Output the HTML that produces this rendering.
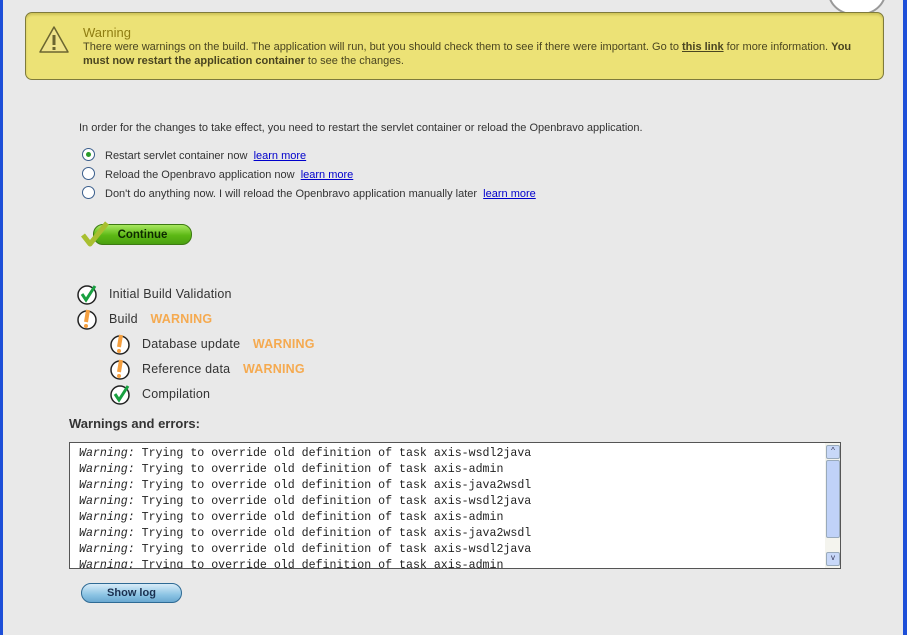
<!DOCTYPE html>
<html><head><style>
body{margin:0;width:907px;height:635px;background:#e9e9e9;position:relative;overflow:hidden;font-family:"Liberation Sans",sans-serif;}
.bl{position:absolute;left:0;top:0;width:3px;height:635px;background:#1d4fd8}
.br{position:absolute;right:0;top:0;width:4px;height:635px;background:#1d4fd8}
.warn{position:absolute;left:25px;top:12px;width:857px;height:66px;background:#ece276;border:1px solid #7e7a3c;border-radius:7px;box-shadow:inset 0 2px 2px #cfc45a}
.warn .t{position:absolute;left:57px;top:12px;font-size:13px;color:#8f7d12;}
.warn .m{position:absolute;left:57px;top:27px;width:785px;font-size:11px;line-height:14px;color:#4a4520}
.warn a{color:#4a4520;font-weight:bold;text-decoration:underline}
.txt{position:absolute;font-size:11px;color:#333}
.radio{position:absolute;width:11px;height:11px;border:1px solid #3a5e8c;border-radius:50%;background:#fff}
.lm{color:#00c;text-decoration:underline}
.st{position:absolute;font-size:12.5px;color:#333;letter-spacing:0.2px}
.w{color:#f5aa50;font-weight:bold;margin-left:9px}
.log{position:absolute;left:69px;top:442px;width:770px;height:125px;background:#fff;border:1px solid #555;overflow:hidden}
.log pre{margin:0;padding:3px 0 0 9px;font-family:"Liberation Mono",monospace;font-size:11.6px;line-height:16px;color:#222}
.sb{position:absolute;right:0;top:0;width:15px;height:125px;background:#f4f4ee}
</style></head><body>
<div class="bl"></div><div class="br"></div>
<div style="position:absolute;left:828px;top:-30px;width:54px;height:42px;border-radius:50%;background:#fff;border:2px solid #999"></div>
<div class="warn">
<svg style="position:absolute;left:12px;top:12px" width="32" height="30" viewBox="0 0 32 30"><path d="M16 2 L30 27 L2 27 Z" fill="#efe38a" stroke="#6b6530" stroke-width="1.5" stroke-linejoin="round"/><rect x="14.5" y="10" width="3" height="10" fill="#6b6530"/><rect x="14.5" y="22" width="3" height="3" fill="#6b6530"/></svg>
<div class="t">Warning</div>
<div class="m">There were warnings on the build. The application will run, but you should check them to see if there were important. Go to <a>this link</a> for more information. <b>You must now restart the application container</b> to see the changes.</div>
</div>
<div class="txt" style="left:79px;top:122px">In order for the changes to take effect, you need to restart the servlet container or reload the Openbravo application.</div>
<div class="radio" style="left:82px;top:148px"><div style="position:absolute;left:3px;top:3px;width:5px;height:5px;border-radius:50%;background:#2a9a2a"></div></div>
<div class="txt" style="left:105px;top:150px">Restart servlet container now &nbsp;<span class="lm">learn more</span></div>
<div class="radio" style="left:82px;top:167px"></div>
<div class="txt" style="left:105px;top:169px">Reload the Openbravo application now &nbsp;<span class="lm">learn more</span></div>
<div class="radio" style="left:82px;top:186px"></div>
<div class="txt" style="left:105px;top:188px">Don't do anything now. I will reload the Openbravo application manually later &nbsp;<span class="lm">learn more</span></div>
<div style="position:absolute;left:93px;top:224px;width:97px;height:19px;border-radius:10px;background:linear-gradient(#a8e860,#5cb814 55%,#4aa010);border:1px solid #3d7a12;font-size:11.5px;font-weight:bold;color:#0e2a00;text-align:center;line-height:20px">Continue</div>
<svg style="position:absolute;left:80px;top:220px" width="30" height="28"><path d="M3 15 L10 24 L27 3" fill="none" stroke="#a8bf30" stroke-width="5" stroke-linejoin="round"/></svg>
<svg width="0" height="0" style="position:absolute"><defs>
<g id="ok"><circle cx="11" cy="12" r="9" fill="#fff" stroke="#222" stroke-width="1.5"/><path d="M6 11 L10 17 L19 3" fill="none" stroke="#18a040" stroke-width="3"/></g>
<g id="wa"><circle cx="11" cy="12" r="9" fill="#fff" stroke="#222" stroke-width="1.5"/><path d="M12 2 L10 14" stroke="#f5a040" stroke-width="4"/><circle cx="10" cy="18" r="2" fill="#f5a040"/></g>
</defs></svg>
<svg style="position:absolute;left:76px;top:283px" width="24" height="24"><use href="#ok"/></svg>
<div class="st" style="left:109px;top:287px">Initial Build Validation</div>
<svg style="position:absolute;left:76px;top:308px" width="24" height="24"><use href="#wa"/></svg>
<div class="st" style="left:109px;top:312px">Build <span class="w">WARNING</span></div>
<svg style="position:absolute;left:109px;top:333px" width="24" height="24"><use href="#wa"/></svg>
<div class="st" style="left:142px;top:337px">Database update <span class="w">WARNING</span></div>
<svg style="position:absolute;left:109px;top:358px" width="24" height="24"><use href="#wa"/></svg>
<div class="st" style="left:142px;top:362px">Reference data <span class="w">WARNING</span></div>
<svg style="position:absolute;left:109px;top:383px" width="24" height="24"><use href="#ok"/></svg>
<div class="st" style="left:142px;top:387px">Compilation</div>
<div style="position:absolute;left:69px;top:416px;font-size:13px;font-weight:bold;color:#333">Warnings and errors:</div>
<div class="log"><pre><i>Warning:</i> Trying to override old definition of task axis-wsdl2java
<i>Warning:</i> Trying to override old definition of task axis-admin
<i>Warning:</i> Trying to override old definition of task axis-java2wsdl
<i>Warning:</i> Trying to override old definition of task axis-wsdl2java
<i>Warning:</i> Trying to override old definition of task axis-admin
<i>Warning:</i> Trying to override old definition of task axis-java2wsdl
<i>Warning:</i> Trying to override old definition of task axis-wsdl2java
<i>Warning:</i> Trying to override old definition of task axis-admin</pre>
<div class="sb">
<div style="position:absolute;left:1px;top:2px;width:12px;height:12px;background:#c8d8f8;border:1px solid #9ab;border-radius:2px;font-size:8px;text-align:center;color:#335">^</div>
<div style="position:absolute;left:1px;top:17px;width:12px;height:76px;background:#c0d2f8;border:1px solid #9ab;border-radius:2px"></div>
<div style="position:absolute;left:1px;top:109px;width:12px;height:12px;background:#c8d8f8;border:1px solid #9ab;border-radius:2px;font-size:8px;text-align:center;color:#335">v</div>
</div></div>
<div style="position:absolute;left:81px;top:583px;width:99px;height:18px;border-radius:10px;background:linear-gradient(#d8ecf8,#8cc4e4 60%,#6aa8d0);border:1px solid #2e6a94;font-size:11px;font-weight:bold;color:#1a3050;text-align:center;line-height:18px">Show log</div>
</body></html>
